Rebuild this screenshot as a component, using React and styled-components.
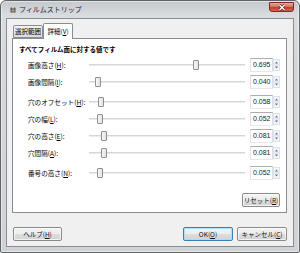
import React from 'react';
import styled, { createGlobalStyle } from 'styled-components';

const GlobalStyle = createGlobalStyle`
  html, body {
    margin: 0;
    padding: 0;
    background: #ffffff;
  }
  body {
    width: 300px;
    height: 253px;
    overflow: hidden;
    font-family: "Noto Sans CJK JP", "Noto Sans", sans-serif;
    color: #000;
  }
  * {
    box-sizing: border-box;
  }
`;

const Window = styled.div`
  width: 300px;
  height: 253px;
  display: flex;
  flex-direction: column;
  padding: 0 5px 5px;
  border: 1px solid #5f6367;
  border-radius: 6px 6px 2px 2px;
  background: linear-gradient(180deg, #c4c8cc 0px, #dadde0 15px, #d5d8db 60px, #d0d3d6 100%);
  box-shadow: inset 0 0 0 1px rgba(255, 255, 255, 0.5);
`;

const TitleBar = styled.div`
  height: 17px;
  display: flex;
  align-items: center;
  gap: 3px;
  padding-left: 4px;
`;

const TitleText = styled.span`
  flex: 1;
  font-size: 7px;
  line-height: 1;
  color: #1a1a1a;
  margin-top: -1px;
`;

const CloseButton = styled.div`
  align-self: flex-start;
  margin-top: 1px;
  width: 25px;
  height: 10px;
  border: 1px solid #7a2e25;
  border-radius: 0 0 3px 3px;
  background: linear-gradient(180deg, #e9a99b 0%, #d9705f 45%, #c2412f 55%, #d2604b 100%);
  display: flex;
  align-items: center;
  justify-content: center;
`;

const Client = styled.div`
  flex: 1;
  display: flex;
  flex-direction: column;
  background: #f0f0f0;
  border: 1px solid #8a8d92;
  padding: 4px 6px 5px 5px;
`;

const TabStrip = styled.div`
  height: 15px;
  display: flex;
  align-items: flex-end;
  padding-left: 1px;
  position: relative;
  z-index: 1;
`;

const Tab = styled.div`
  width: 30px;
  height: ${p => (p.$active ? 16 : 13)}px;
  margin-bottom: ${p => (p.$active ? -1 : 0)}px;
  border: 1px solid #898c95;
  border-bottom: ${p => (p.$active ? 'none' : '1px solid #898c95')};
  border-radius: 2px 2px 0 0;
  background: ${p => (p.$active ? '#ffffff' : 'linear-gradient(180deg, #f2f2f2, #dcdcdc)')};
  font-size: 6.5px;
  line-height: 1;
  display: flex;
  align-items: center;
  justify-content: center;
  padding-bottom: ${p => (p.$active ? 1 : 0)}px;
`;

const Panel = styled.div`
  height: 175px;
  display: flex;
  flex-direction: column;
  border: 1px solid #898c95;
  background: #ffffff;
  padding: 6px 6px 5px 6px;
`;

const Heading = styled.div`
  font-size: 6.5px;
  font-weight: 700;
  line-height: 9px;
  height: 9px;
`;

const Groups = styled.div`
  margin-top: 4px;
  display: flex;
  flex-direction: column;
  gap: 6px;
`;

const Group = styled.div`
  display: flex;
  flex-direction: column;
  gap: 3px;
`;

const Row = styled.div`
  height: 14px;
  display: flex;
  align-items: center;
  padding-left: 9px;
`;

const Label = styled.span`
  width: 61px;
  font-size: 6.6px;
  line-height: 1;
  white-space: nowrap;
`;

const Slider = styled.div`
  flex: 1;
  height: 14px;
  margin-right: 5px;
  position: relative;
  display: flex;
  align-items: center;
`;

const Track = styled.div`
  width: 100%;
  height: 2px;
  background: #d6d6d6;
  border-bottom: 1px solid #ececec;
`;

const Thumb = styled.div`
  position: absolute;
  top: 2px;
  width: 6px;
  height: 10px;
  border: 1px solid #8e8f8f;
  border-radius: 1px;
  background: linear-gradient(90deg, #f7f7f7, #e2e2e2);
`;

const ValueBox = styled.div`
  width: 23px;
  height: 14px;
  border: 1px solid #abadb3;
  border-left-color: #e2e3ea;
  border-right-color: #dbdfe6;
  border-bottom-color: #e3e9ef;
  background: #ffffff;
  font-family: "Liberation Sans", Arial, sans-serif;
  font-size: 7px;
  line-height: 12px;
  padding-left: 2px;
  color: #1a1a1a;
`;

const Spin = styled.div`
  width: 7px;
  height: 14px;
  display: flex;
  flex-direction: column;
  justify-content: center;
`;

const Bottom = styled.div`
  margin-top: auto;
  display: flex;
  justify-content: flex-end;
`;

const Button = styled.div`
  width: ${p => p.$w}px;
  height: 14px;
  border: 1px solid ${p => (p.$default ? '#3c7fb1' : '#8a8a8a')};
  border-radius: 2px;
  background: linear-gradient(180deg, #f4f4f4 0%, #ececec 50%, #dedede 50%, #d2d2d2 100%);
  box-shadow: inset 0 0 0 1px ${p => (p.$default ? 'rgba(170, 220, 248, 0.9)' : 'rgba(255, 255, 255, 0.7)')};
  font-size: 6.5px;
  line-height: 1;
  display: flex;
  align-items: center;
  justify-content: center;
  color: #111;
`;

const ButtonRow = styled.div`
  margin-top: 14px;
  height: 14px;
  display: flex;
  gap: 4px;
  padding-left: 1px;
`;

const Spacer = styled.div`
  flex: 1;
`;

const AppIcon = () => (
  <svg width="6" height="6" viewBox="0 0 6 6">
    <path d="M0.5 1 L1.5 0 L2 1.5 L4 1.5 L4.5 0 L5.5 1 L5.5 5.5 L0.5 5.5 Z" fill="#5a5046" />
    <rect x="1.5" y="2.5" width="3" height="2" fill="#b8a890" />
  </svg>
);

const CloseGlyph = () => (
  <svg width="8" height="7" viewBox="0 0 8 7">
    <path d="M1.5 1 L6.5 6 M6.5 1 L1.5 6" stroke="#5a1c14" strokeWidth="2.6" />
    <path d="M1.5 1 L6.5 6 M6.5 1 L1.5 6" stroke="#ffffff" strokeWidth="1.4" />
  </svg>
);

const Arrows = () => (
  <svg width="7" height="14" viewBox="0 0 7 14">
    <rect x="0.5" y="1.5" width="6" height="5.5" fill="#f3f5f8" stroke="#dde2ea" strokeWidth="1" />
    <rect x="0.5" y="7" width="6" height="5.5" fill="#f3f5f8" stroke="#dde2ea" strokeWidth="1" />
    <path d="M2 5.5 L3.5 3.5 L5 5.5 Z" fill="#5a6f8e" />
    <path d="M2 8.5 L3.5 10.5 L5 8.5 Z" fill="#5a6f8e" />
  </svg>
);

const groups = [
  [
    { name: '画像高さ', key: 'H', value: 0.695 },
    { name: '画像間隔', key: 'I', value: 0.04 },
  ],
  [
    { name: '穴のオフセット', key: 'H', value: 0.058 },
    { name: '穴の幅', key: 'L', value: 0.052 },
    { name: '穴の高さ', key: 'E', value: 0.081 },
    { name: '穴間隔', key: 'A', value: 0.081 },
  ],
  [{ name: '番号の高さ', key: 'N', value: 0.052 }],
];

function ParamRow({ name, keyChar, value }) {
  return (
    <Row>
      <Label>
        {name}(<u>{keyChar}</u>):
      </Label>
      <Slider>
        <Track />
        <Thumb style={{ left: `calc(${value} * (100% - 6px))` }} />
      </Slider>
      <ValueBox>{value.toFixed(3)}</ValueBox>
      <Spin>
        <Arrows />
      </Spin>
    </Row>
  );
}

export default function App() {
  return (
    <>
      <GlobalStyle />
      <Window>
        <TitleBar>
          <AppIcon />
          <TitleText>フィルムストリップ</TitleText>
          <CloseButton>
            <CloseGlyph />
          </CloseButton>
        </TitleBar>
        <Client>
          <TabStrip>
            <Tab>選択範囲</Tab>
            <Tab $active>
              詳細(<u>V</u>)
            </Tab>
          </TabStrip>
          <Panel>
            <Heading>すべてフィルム面に対する値です</Heading>
            <Groups>
              {groups.map((g, i) => (
                <Group key={i}>
                  {g.map(r => (
                    <ParamRow key={r.name} name={r.name} keyChar={r.key} value={r.value} />
                  ))}
                </Group>
              ))}
            </Groups>
            <Bottom>
              <Button $w={38}>
                リセット(<u>R</u>)
              </Button>
            </Bottom>
          </Panel>
          <ButtonRow>
            <Button $w={49}>
              ヘルプ(<u>H</u>)
            </Button>
            <Spacer />
            <Button $w={50} $default>
              OK(<u>O</u>)
            </Button>
            <Button $w={50}>
              キャンセル(<u>C</u>)
            </Button>
          </ButtonRow>
        </Client>
      </Window>
    </>
  );
}
